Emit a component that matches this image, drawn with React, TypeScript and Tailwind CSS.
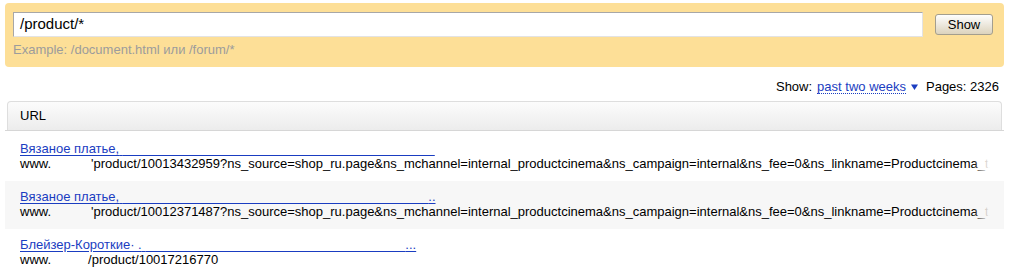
import React from 'react';

// rows of the URL table; hidden = the redacted part of the title
const rows = [
  {
    title: 'Вязаное платье,',
    hidden: 'xxxxxxxxxxxxxxxxxxxxxxxxxxxxxxxxxxxxxxxxxxxxxxxx',
    tail: '',
    path: "'product/10013432959?ns_source=shop_ru.page&ns_mchannel=internal_productcinema&ns_campaign=internal&ns_fee=0&ns_linkname=Productcinema_t",
    gap: 'w-[40px]',
    striped: false,
  },
  {
    title: 'Вязаное платье,',
    hidden: 'xxxxxxxxxxxxxxxxxxxxxxxxxxxxxxxxxxxxxxxxxxxxxxx',
    tail: '..',
    path: "'product/10012371487?ns_source=shop_ru.page&ns_mchannel=internal_productcinema&ns_campaign=internal&ns_fee=0&ns_linkname=Productcinema_t",
    gap: 'w-[40px]',
    striped: true,
  },
  {
    title: 'Блейзер-Короткие· .',
    hidden: 'xxxxxxxxxxxxxxxxxxxxxxxxxxxxxxxxxxxxxxxx',
    tail: '...',
    path: '/product/10017216770',
    gap: 'w-[37px]',
    striped: false,
  },
];

export default function App() {
  return (
    <div className="w-[1009px] h-[272px] overflow-hidden bg-white font-['Liberation_Sans',Arial,sans-serif] text-[13px] text-black">
      {/* filter panel */}
      <div className="mx-[5px] mt-[3px] h-[64px] rounded-[4px] bg-[#fddf97] pl-[8px] pr-[11px] pt-[9px]">
        <div className="flex items-start gap-[12px]">
          <div className="flex h-[25px] flex-1 items-center border border-[#a7a7a7] border-b-[#e3e3e3] border-r-[#e3e3e3] bg-white pl-[6px] text-[15px]">
            /product/*
          </div>
          <button className="mt-[2px] h-[21px] w-[58px] rounded-[3px] border border-[#a39e8e] bg-gradient-to-b from-[#fefefe] to-[#dcd3bd] text-[13px] leading-none">
            Show
          </button>
        </div>
        <div className="mt-[5px] text-[#9c9c9c] leading-[15px]">Example: /document.html или /forum/*</div>
      </div>

      {/* period / count */}
      <div className="mt-[12px] flex items-center justify-end pr-[10px] leading-[15px]">
        <span>Show:</span>
        <span className="ml-[5px] border-b border-dotted border-[#1a3dc1] text-[#1a3dc1] leading-[13px]">past two weeks</span>
        <svg className="ml-[5px]" width="7" height="6" viewBox="0 0 7 6">
          <path d="M0 0.5 H7 L3.5 6 Z" fill="#1a3dc1" />
        </svg>
        <span className="ml-[8px]">Pages: 2326</span>
      </div>

      {/* table header */}
      <div className="mx-[5px] mt-[7px] border-b border-[#d6d6d6]">
        <div className="mx-[2px] flex h-[29px] items-center rounded-t-[4px] border border-b-0 border-[#dedede] bg-gradient-to-b from-[#fcfcfc] to-[#ececec] pl-[12px]">
          URL
        </div>
      </div>

      {/* rows */}
      <div className="mx-[5px] mt-[2px]">
        {rows.map((r, i) => (
          <div key={i} className={`h-[48px] pl-[15px] pt-[8px] ${r.striped ? 'bg-[#f7f7f7]' : ''}`}>
            <div className="leading-[15px]">
              <span className="text-[#1a3dc1] underline decoration-[#1a3dc1] underline-offset-[2px]">
                {r.title} <span className="text-transparent">{r.hidden}</span>
                {r.tail}
              </span>
            </div>
            <div className="flex whitespace-nowrap leading-[15px]">
              <span>www.</span>
              <span className={`${r.gap} shrink-0`} />
              <span className="relative">
                {r.path}
                {/* long urls fade out at the right edge */}
                {r.path.length > 40 && (
                  <span className={`absolute right-0 top-0 h-full w-[16px] bg-gradient-to-r from-transparent ${r.striped ? 'to-[#f7f7f7]' : 'to-white'}`} />
                )}
              </span>
            </div>
          </div>
        ))}
      </div>
    </div>
  );
}
